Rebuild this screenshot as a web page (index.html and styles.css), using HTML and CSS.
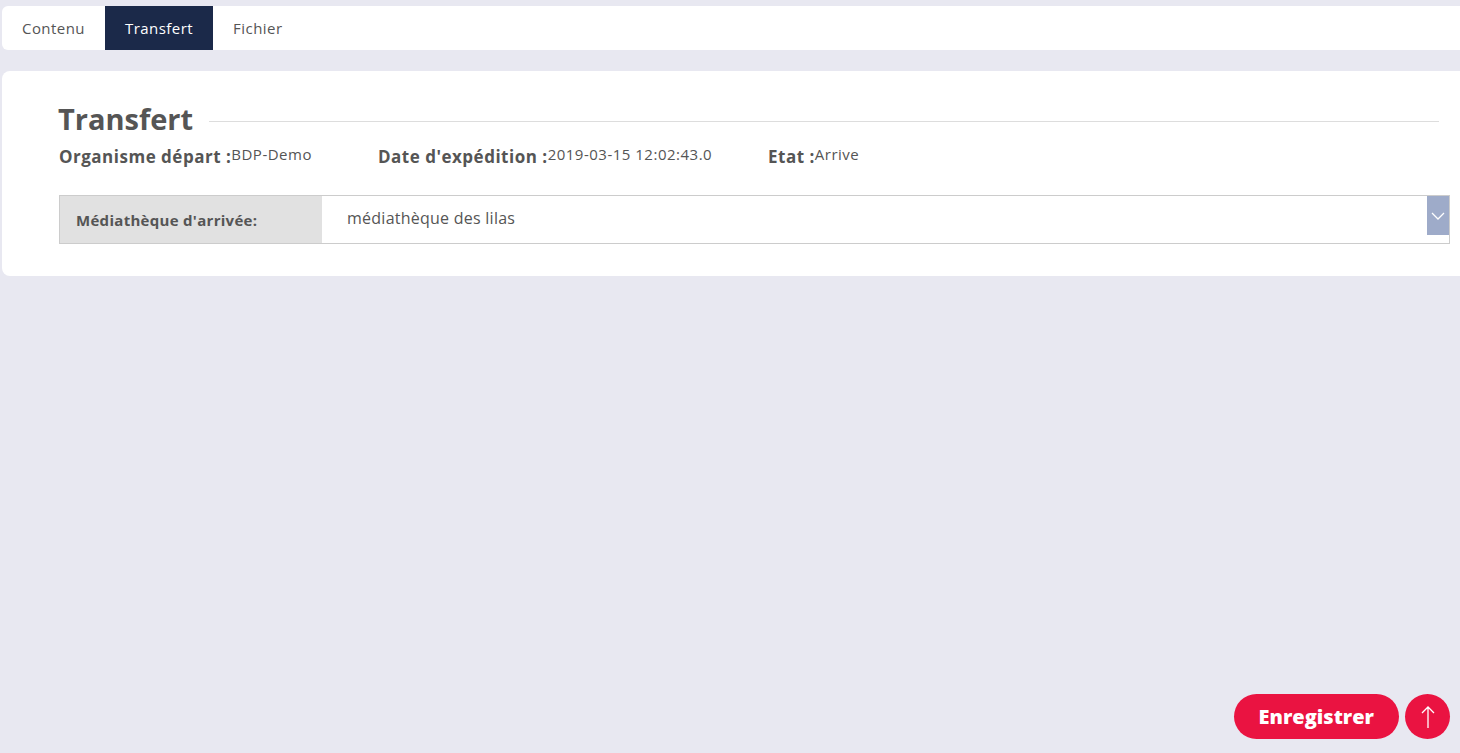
FILE: index.html
```html
<!DOCTYPE html>
<html lang="fr">
<head>
    <meta charset="UTF-8">
    <title>Transfert</title>
    <link rel="stylesheet" href="styles.css">
</head>
<body>
    <div class="tabs">
        <a class="tab">Contenu</a>
        <a class="tab active">Transfert</a>
        <a class="tab">Fichier</a>
    </div>

    <div class="card">
        <div class="title-row">
            <h2>Transfert</h2>
            <div class="rule"></div>
        </div>

        <div class="infos">
            <div class="info info-org"><b>Organisme départ :</b><span>BDP-Demo</span></div>
            <div class="info info-date"><b>Date d'expédition :</b><span>2019-03-15 12:02:43.0</span></div>
            <div class="info"><b>Etat :</b><span>Arrive</span></div>
        </div>

        <div class="field">
            <label>Médiathèque d'arrivée:</label>
            <div class="select">
                <span>médiathèque des lilas</span>
                <div class="arrow">
                    <svg width="14" height="8" viewBox="0 0 14 8"><path d="M1 1l6 6 6-6" fill="none" stroke="#fff" stroke-width="1.3"/></svg>
                </div>
            </div>
        </div>
    </div>

    <div class="actions">
        <button class="save">Enregistrer</button>
        <button class="top">
            <svg width="14" height="24" viewBox="0 0 14 24"><path d="M7 23V2M1 8l6-6 6 6" fill="none" stroke="#fff" stroke-width="1.3"/></svg>
        </button>
    </div>
</body>
</html>
```

FILE: styles.css
```css
body { margin: 0; background: #e8e8f1; font-family: "Open Sans", Lato, sans-serif; color: #555; height: 753px; position: relative; overflow: hidden; }

.tabs { display: flex; margin: 6px 0 0 2px; height: 44px; background: #fff; border-radius: 6px 0 0 6px; overflow: hidden; }
.tab { display: flex; align-items: center; padding: 0 20px; font-size: 15px; letter-spacing: 0.45px; color: #555; }
.tab.active { background: #1b2949; color: #fff; }

.card { margin: 21px 0 0 2px; background: #fff; border-radius: 8px 0 0 8px; padding: 28px 10px 32px 57px; }

.title-row { display: flex; align-items: center; margin-right: 11px; }
.title-row h2 { margin: 0 0 0 -1px; font-size: 29px; font-weight: 700; color: #555; line-height: 40px; }
.rule { flex: 1; height: 1px; background: #ddd; margin: 5px 0 0 16px; }

.infos { display: flex; margin: 6px 0 0 0; height: 31px; }
.info b { font-size: 17px; font-weight: 700; letter-spacing: 0.5px; }
.info span { font-size: 15px; letter-spacing: 0.5px; position: relative; top: -3px; }
.info-org { width: 319px; }
.info-date { width: 390px; }

.field { display: flex; margin: 19px 0 0 0; height: 47px; border: 1px solid #ccc; }
.field label { width: 262px; background: #e1e1e1; font-size: 15px; font-weight: 700; letter-spacing: 0.3px; display: flex; align-items: center; padding-left: 16px; box-sizing: border-box; }
.select { flex: 1; display: flex; align-items: flex-start; }
.select span { flex: 1; padding: 11px 0 0 25px; font-size: 16px; letter-spacing: 0.25px; }
.arrow { width: 22px; height: 39px; background: #9eabc9; display: flex; align-items: center; justify-content: center; }

.actions { position: absolute; right: 10px; bottom: 14px; display: flex; gap: 6px; }
.actions button { border: none; background: #ea1341; color: #fff; font-family: inherit; cursor: pointer; }
.save { height: 45px; padding: 0 25px; border-radius: 23px; font-size: 20px; font-weight: 800; }
.top { width: 45px; height: 45px; border-radius: 50%; display: flex; align-items: center; justify-content: center; padding: 0; }
```
